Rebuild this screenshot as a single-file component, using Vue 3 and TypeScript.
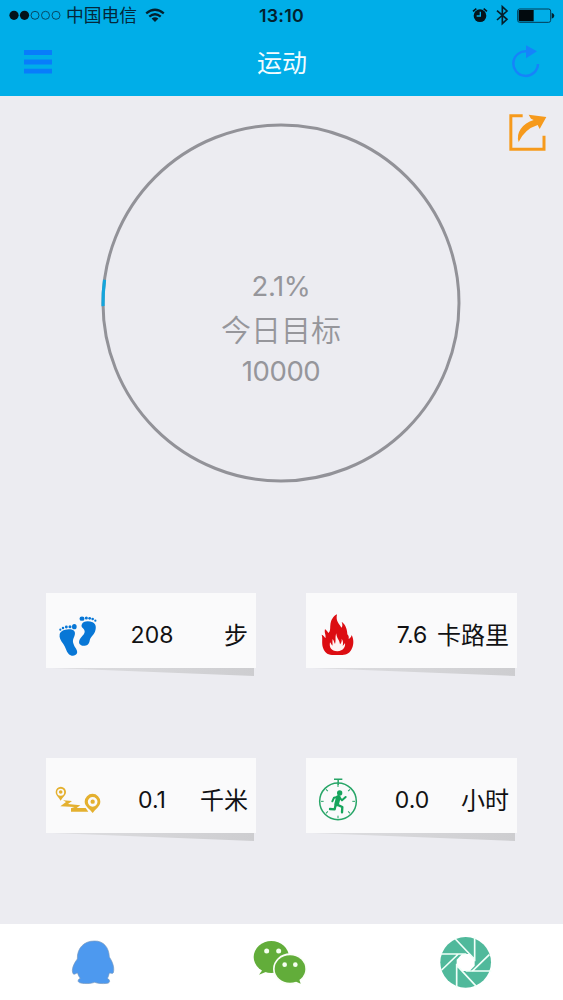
<script setup lang="ts">
interface Metric {
  id: 'steps' | 'calories' | 'distance' | 'duration'
  value: string
  unit: string
}

const metrics: Metric[] = [
  { id: 'steps', value: '208', unit: '步' },
  { id: 'calories', value: '7.6', unit: '卡路里' },
  { id: 'distance', value: '0.1', unit: '千米' },
  { id: 'duration', value: '0.0', unit: '小时' },
]

const percent = 2.1
const goal = 10000
const radius = 178
const circumference = 2 * Math.PI * radius
const dash = `${(circumference * percent) / 100 + 3} ${circumference}`

const ticks = [0, 45, 90, 135, 180, 225, 270, 315]
</script>

<template>
  <div class="screen">
    <header class="header">
      <div class="status">
        <div class="status-left">
          <svg class="signal" width="52" height="12" viewBox="0 0 52 12">
            <circle cx="5" cy="6.300" r="4.600" fill="#03121a" />
            <circle cx="15.500" cy="6.300" r="4.600" fill="#03121a" />
            <g fill="none" stroke="#064a66" stroke-width="1">
              <circle cx="26" cy="6.300" r="4" />
              <circle cx="36.500" cy="6.300" r="4" />
              <circle cx="47" cy="6.300" r="4" />
            </g>
          </svg>
          <span class="carrier">中国电信</span>
          <svg class="wifi" width="20" height="15" viewBox="0 0 20 15">
            <g fill="none" stroke="#03202d" stroke-width="2.300">
              <path d="M1.2 5.3Q10 -1.9 18.8 5.3" />
              <path d="M4.3 8.6Q10 3.8 15.7 8.6" />
            </g>
            <path d="M6.6 10.6Q10 7.8 13.4 10.6L10 14Z" fill="#03202d" />
          </svg>
        </div>
        <span class="time">13:10</span>
        <div class="status-right">
          <svg width="90" height="30" viewBox="67 0 270 90">
            <circle cx="91" cy="47" r="19" fill="#04141c" />
            <path d="M70 34L80 26M102 26L112 34" stroke="#04141c" stroke-width="5" />
            <path d="M92 35V48H81" fill="none" stroke="#00aee8" stroke-width="4" />
            <path d="M142 32L172 58L158 71V20L172 33L142 60" fill="none" stroke="#04202c" stroke-width="5" />
            <rect x="204" y="27" width="99" height="40" rx="6" fill="none" stroke="#043c54" stroke-width="3" />
            <path d="M209 30H252V64H209Q207 64 207 61V33Q207 30 209 30Z" fill="#020a0e" />
            <path d="M306 38Q314 41 314 47Q314 53 306 56Z" fill="#04202c" />
          </svg>
        </div>
      </div>
      <nav class="nav">
        <button class="nav-button" aria-label="菜单">
          <svg width="28" height="24" viewBox="0 0 28 24">
            <path d="M0 2.5H28M0 12H28M0 21.2H28" stroke="#087dfb" stroke-width="4.800" />
          </svg>
        </button>
        <h1 class="title">运动</h1>
        <button class="nav-button" aria-label="刷新">
          <svg width="28" height="34" viewBox="184 136 84 102">
            <path d="M230 155A37 37 0 1 0 262 193" fill="none" stroke="#1683fa" stroke-width="7.500" />
            <path d="M226 137L259 155L226 176Z" fill="#1683fa" />
          </svg>
        </button>
      </nav>
    </header>

    <main class="content">
      <div class="tools">
        <button class="share" aria-label="分享">
          <svg width="38" height="38" viewBox="177 338 114 114">
            <path d="M218 346.500H182.500V446.500H282V406" fill="none" stroke="#f69a1c" stroke-width="9" />
            <path
              d="M236 343L289 350L269 386L263 374Q224 386 206 425Q199 405 212 386Q226 366 251 359L243 355Z"
              fill="#f69a1c"
            />
          </svg>
        </button>
      </div>

      <section class="goal">
        <svg class="ring" width="360" height="360" viewBox="0 0 360 360">
          <circle cx="180" cy="180" :r="radius" fill="none" stroke="#929298" stroke-width="3" />
          <circle
            cx="180"
            cy="180"
            :r="radius"
            fill="none"
            stroke="#14a5dc"
            stroke-width="3.200"
            :stroke-dasharray="dash"
            transform="rotate(179 180 180)"
          />
        </svg>
        <div class="goal-text">
          <span class="figure">{{ percent }}%</span>
          <span class="caption">今日目标</span>
          <span class="figure">{{ goal }}</span>
        </div>
      </section>

      <section class="metrics">
        <article v-for="metric in metrics" :key="metric.id" class="metric">
          <div class="card">
            <svg v-if="metric.id === 'steps'" class="icon" viewBox="18 24 243 225">
              <g fill="#0877d6">
                <path d="M59 148C61 137 77 133 91 133C103 134 107 142 104 151C101 161 96 165 101 178C104 188 114 196 111 205C107 214 93 215 86 207C78 198 77 187 70 177C62 167 57 158 59 148Z" />
                <ellipse cx="103" cy="125" rx="7" ry="8" />
                <circle cx="90" cy="125" r="4.600" />
                <circle cx="79" cy="126" r="4.300" />
                <circle cx="69" cy="129" r="3.800" />
                <circle cx="61" cy="134" r="3.400" />
                <path d="M125 119C129 108 145 107 158 112C169 117 169 130 165 140C160 152 151 155 149 167C147 180 137 184 127 182C116 179 115 171 120 162C127 151 134 149 134 139C134 130 122 128 125 119Z" />
                <ellipse cx="126" cy="101" rx="7.500" ry="6.500" />
                <circle cx="139" cy="99" r="4.600" />
                <circle cx="149" cy="100" r="4.200" />
                <circle cx="158" cy="102" r="3.800" />
                <circle cx="166" cy="107" r="3.400" />
              </g>
            </svg>

            <svg v-else-if="metric.id === 'calories'" class="icon" viewBox="18 24 243 225">
              <path
                d="M111 88C106 111 119 116 124 128C128 125 128 118 125 110C137 119 142 134 142 148C146 151 147 157 146 162C151 160 154 155 155 150C162 163 161 179 156 190C150 204 141 210 127 210H96C81 209 73 200 69 188C64 174 69 160 65 149C70 151 74 155 76 160C79 151 72 144 75 132C79 136 82 139 85 144C92 139 90 130 91 121C92 106 99 94 111 88Z"
                fill="#dc0d12"
              />
              <path
                d="M109 145C109 159 119 165 120 178C124 174 126 168 125 161C131 169 129 177 128 183C131 180 133 177 135 174C137 184 131 198 112 199C93 198 87 187 90 172C93 175 94 179 97 182C99 177 96 170 98 162C102 166 102 173 105 177C109 166 104 158 109 145Z"
                fill="#fff4f2"
              />
            </svg>

            <svg v-else-if="metric.id === 'distance'" class="icon" viewBox="18 24 243 225">
              <g fill="#e4b02f">
                <path fill-rule="evenodd" d="M62 152C56 142 47 136 47 126A15.500 15.500 0 0 1 78 126C78 136 68 142 62 152ZM62 116A10.500 10.500 0 1 0 62 137A10.500 10.500 0 1 0 62 116Z" />
                <circle cx="62" cy="126" r="5.500" />
                <path fill-rule="evenodd" d="M158 189C150 177 134 169 134 155A23.500 23.500 0 0 1 181 155C181 169 166 177 158 189ZM158 141A14.500 14.500 0 1 0 158 170A14.500 14.500 0 1 0 158 141Z" />
                <circle cx="158" cy="155" r="6.500" />
                <path d="M69 151L96 153L84 162L121 166L110 174H137L145 185H93V175L104 171L61 169L78 156Z" />
              </g>
            </svg>

            <svg v-else class="icon" viewBox="18 24 243 225">
              <g fill="none" stroke="#27a567">
                <circle cx="114" cy="154" r="55" stroke-width="4.500" />
                <path d="M102 88H127M114.500 88V105" stroke-width="4.500" />
                <path
                  v-for="angle in ticks"
                  :key="angle"
                  d="M114 103V111"
                  stroke-width="3"
                  :transform="`rotate(${angle} 114 154)`"
                />
              </g>
              <circle cx="119" cy="129" r="8" fill="#16a45c" />
              <g fill="none" stroke="#16a45c" stroke-linejoin="round" stroke-linecap="round">
                <path d="M115 142L110 162" stroke-width="14" />
                <path d="M112 141L102 143L97 154M119 143L126 151L137 141" stroke-width="6" />
                <path d="M111 164L127 171L126 187M107 164L104 178L90 177" stroke-width="7" />
              </g>
            </svg>
            <span class="value">{{ metric.value }}</span>
            <span class="unit">{{ metric.unit }}</span>
          </div>
          <div class="fold"></div>
        </article>
      </section>
    </main>

    <footer class="tabs">
      <button class="tab" aria-label="QQ">
        <svg width="70" height="76" viewBox="0 27 210 228">
          <path
            d="M103 78C130 77 147 97 148 126C158 141 164 158 160 173C157 178 152 173 148 174C146 181 145 186 142 190C150 194 152 203 142 205C126 207 112 205 104 202C93 206 76 207 62 204C51 202 53 193 61 190C57 185 54 180 53 174C47 174 44 180 40 177C32 165 42 145 52 132C51 99 72 78 103 78Z"
            fill="#4d99ef"
            stroke="#7697bd"
            stroke-width="2"
          />
        </svg>
      </button>
      <button class="tab" aria-label="微信">
        <svg width="70" height="75" viewBox="0 0 210 225">
          <path d="M54 133L42 149L64 140Z" fill="#62ad3a" />
          <ellipse cx="79" cy="96" rx="53" ry="48" fill="#62ad3a" />
          <ellipse cx="135" cy="132" rx="51" ry="47" fill="#fbfef8" />
          <path d="M149 168L167 176L161 158Z" fill="#62ad3a" />
          <ellipse cx="135" cy="132" rx="46" ry="41" fill="#62ad3a" />
          <g fill="#f5fff0">
            <circle cx="65" cy="78" r="7.500" />
            <circle cx="101" cy="78" r="7.500" />
            <circle cx="119" cy="119" r="7" />
            <circle cx="151" cy="119" r="7" />
          </g>
        </svg>
      </button>
      <button class="tab" aria-label="朋友圈">
        <svg width="70" height="75" viewBox="0 0 210 225">
          <circle cx="107" cy="112" r="76" fill="#50b99b" />
          <path d="M96 87H119L134 104V122L119 138H97L80 122V104Z" fill="#fff" />
          <path
            d="M31 87H109M76 42L133 102M134 36V109M178 89L126 139M184 138H107M139 184L81 122M80 188V116M35 135L85 87"
            fill="none"
            stroke="#f1fff9"
            stroke-width="5"
          />
        </svg>
      </button>
    </footer>
  </div>
</template>

<style>
body {
  margin: 0;
}
</style>

<style scoped>
.screen {
  display: flex;
  flex-direction: column;
  width: 563px;
  height: 1000px;
  overflow: hidden;
  background: #ececf1;
  font-family: Inter, 'Noto Sans CJK SC', sans-serif;
}

button {
  display: flex;
  padding: 0;
  border: 0;
  background: none;
}

svg {
  display: block;
  flex: none;
}

.header {
  height: 96px;
  background: #00aee8;
}

.status {
  display: grid;
  grid-template-columns: 1fr auto 1fr;
  align-items: center;
  height: 30px;
  padding: 0 1px 0 9px;
}

.status-left {
  display: flex;
  align-items: center;
}

.carrier {
  margin-left: 5px;
  padding-top: 2px;
  color: #04283a;
  font-size: 17.8px;
  line-height: 28px;
}

.wifi {
  margin-left: 8px;
}

.time {
  margin-left: -8px;
  padding-top: 2px;
  color: #03222f;
  font-size: 17.8px;
  font-weight: 600;
  letter-spacing: 0.3px;
  line-height: 28px;
}

.status-right {
  display: flex;
  justify-content: flex-end;
}

.nav {
  display: flex;
  align-items: center;
  justify-content: space-between;
  height: 64px;
  padding: 0 23px 0 24px;
}

.title {
  margin: 0;
  padding-top: 3px;
  color: #f2fcff;
  font-size: 25px;
  font-weight: 400;
  line-height: 61px;
}

.content {
  flex: 1;
}

.tools {
  display: flex;
  justify-content: flex-end;
  height: 28px;
  padding: 17px 16px 0 0;
  box-sizing: border-box;
}

.goal {
  display: grid;
  justify-items: center;
  width: 562px;
  height: 360px;
  margin-top: -1px;
}

.ring,
.goal-text {
  grid-area: 1 / 1;
}

.goal-text {
  display: flex;
  flex-direction: column;
  align-items: center;
  padding-top: 142px;
  color: #96969b;
}

.figure {
  font-size: 27.5px;
  font-weight: 400;
  letter-spacing: -0.4px;
  line-height: 42px;
}

.caption {
  padding-top: 3px;
  font-size: 30px;
  font-weight: 350;
  line-height: 40px;
}

.metrics {
  display: grid;
  grid-template-columns: 210px 211px;
  gap: 82px 50px;
  margin: 110px 0 0 46px;
}

.card {
  display: grid;
  grid-template-columns: 81px 50px 1fr;
  align-items: center;
  height: 75px;
  padding-right: 8px;
  background: #fafafb;
}

.icon {
  width: 81px;
  height: 75px;
}

.value {
  justify-self: center;
  font-size: 23px;
}

.unit {
  justify-self: end;
  font-size: 24px;
  white-space: nowrap;
}

.value,
.unit {
  margin-top: 10px;
  color: #111113;
  line-height: 65px;
}

.fold {
  height: 8px;
  margin: 0 2px 0 6px;
  background: linear-gradient(90deg, #dedee1, #cdcdd0);
  clip-path: polygon(0 0, 100% 0, 100% 100%);
}

.tabs {
  display: flex;
  align-items: center;
  justify-content: space-between;
  height: 76px;
  padding: 0 63px 0 60px;
  background: #fff;
}
</style>
